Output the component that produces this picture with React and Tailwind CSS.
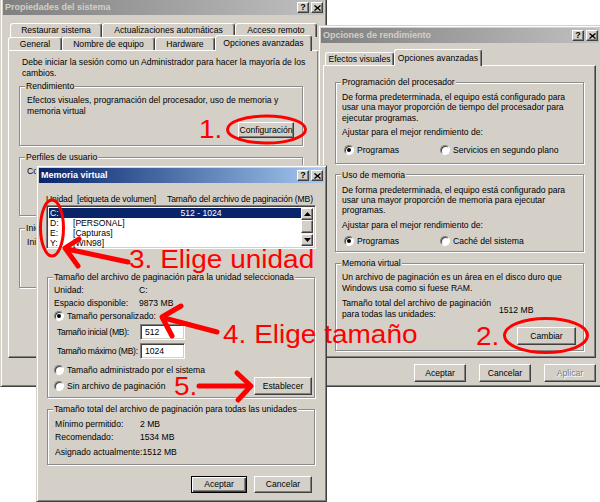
import React from "react";

const raisedCls =
  "bg-[#d4d0c8] border border-t-white border-l-white border-r-[#404040] border-b-[#404040] shadow-[inset_-1px_-1px_0_#808080]";
const sunkenCls =
  "bg-white border border-t-[#808080] border-l-[#808080] border-r-white border-b-white shadow-[inset_1px_1px_0_#404040,inset_-1px_-1px_0_#d4d0c8]";

function XGlyph() {
  return (
    <svg width="7" height="6" viewBox="0 0 7 6">
      <path d="M0.5 0.5 L6.5 5.5 M6.5 0.5 L0.5 5.5" stroke="#000" strokeWidth="1.4" fill="none" />
    </svg>
  );
}

function CapBtn({ children }) {
  return (
    <div className={"w-[12px] h-[11px] flex items-center justify-center text-black font-bold text-[9px] leading-none " + raisedCls}>
      {children}
    </div>
  );
}

function TitleBar({ title, active }) {
  return (
    <div
      className={
        "h-[15px] shrink-0 flex items-center pl-[2px] pr-[1px] " +
        (active
          ? "bg-linear-to-r from-[#0a246a] to-[#a6caf0] text-white"
          : "bg-linear-to-r from-[#808080] to-[#c0c0c0] text-[#d4d0c8]")
      }
    >
      <span className="flex-1 font-bold text-[9px] leading-none whitespace-nowrap">{title}</span>
      <div className="flex gap-[2px]">
        <CapBtn>?</CapBtn>
        <CapBtn>
          <XGlyph />
        </CapBtn>
      </div>
    </div>
  );
}

function Win({ className, children }) {
  return (
    <div
      className={
        "absolute bg-[#d4d0c8] border border-t-[#d4d0c8] border-l-[#d4d0c8] border-r-[#404040] border-b-[#404040] shadow-[inset_1px_1px_0_#fff,inset_-1px_-1px_0_#808080] p-[2px] flex flex-col " +
        className
      }
    >
      {children}
    </div>
  );
}

function Tab({ children, className, selected }) {
  return (
    <div
      className={
        "flex items-center justify-center bg-[#d4d0c8] border-t border-l border-r border-t-white border-l-white border-r-[#404040] rounded-t-[3px] shadow-[inset_-1px_0_0_#808080] whitespace-nowrap leading-none " +
        (selected ? "relative z-10 -mb-px " : "") +
        className
      }
    >
      {children}
    </div>
  );
}

function Panel({ className, children }) {
  return (
    <div
      className={
        "flex flex-col bg-[#d4d0c8] border border-t-white border-l-white border-r-[#404040] border-b-[#404040] shadow-[inset_-1px_-1px_0_#808080] " +
        className
      }
    >
      {children}
    </div>
  );
}

function Group({ title, className, bodyClass, children }) {
  return (
    <fieldset
      className={
        "min-w-0 border border-[#8c8c8c] shadow-[1px_1px_0_#fff,inset_1px_1px_0_#fff] " + className
      }
    >
      <legend className="ml-[5px] px-[1px] leading-[10px] bg-[#d4d0c8] whitespace-nowrap">{title}</legend>
      <div className={bodyClass}>{children}</div>
    </fieldset>
  );
}

function Btn({ children, className, def, disabled }) {
  return (
    <div
      className={
        "flex items-center justify-center bg-[#d4d0c8] whitespace-nowrap leading-none " +
        (def
          ? "border border-black shadow-[inset_1px_1px_0_#fff,inset_-1px_-1px_0_#404040,inset_-2px_-2px_0_#808080] "
          : "border border-t-white border-l-white border-r-[#404040] border-b-[#404040] shadow-[inset_-1px_-1px_0_#808080] ") +
        (disabled ? "text-[#808080] [text-shadow:1px_1px_0_#fff] " : "text-black ") +
        className
      }
    >
      {children}
    </div>
  );
}

function Radio({ checked }) {
  return (
    <div className="w-[10px] h-[10px] shrink-0 rounded-full bg-white border border-t-[#808080] border-l-[#808080] border-r-white border-b-white shadow-[inset_1px_1px_0_#404040] flex items-center justify-center">
      {checked && <div className="w-[4px] h-[4px] rounded-full bg-black" />}
    </div>
  );
}

function RadioLabel({ checked, children, className }) {
  return (
    <div className={"flex items-center gap-[3px] whitespace-nowrap " + (className || "")}>
      <Radio checked={checked} />
      <span>{children}</span>
    </div>
  );
}

function Arrow({ up }) {
  return (
    <svg width="7" height="4" viewBox="0 0 7 4">
      {up ? <path d="M3.5 0 L7 4 L0 4 Z" fill="#000" /> : <path d="M0 0 L7 0 L3.5 4 Z" fill="#000" />}
    </svg>
  );
}

export default function App() {
  const red =
    "absolute text-[25px] leading-[25px] text-[#ff0000] font-['Liberation_Sans',Arial,sans-serif] whitespace-nowrap origin-left scale-x-[1.12]";
  return (
    <div className="relative w-[600px] h-[502px] overflow-hidden bg-white font-['Liberation_Sans',Arial,sans-serif] text-[8.6px] leading-[10px] text-black">
      {/* Window 1: Propiedades del sistema */}
      <Win className="left-0 top-[-3px] w-[327px] h-[390px]">
        <TitleBar title="Propiedades del sistema" />
        <div className="mt-[8px] mx-[5px] flex flex-col">
          <div className="flex h-[14px] ml-[2px]">
            <Tab className="w-[92px] h-[14px]">Restaurar sistema</Tab>
            <Tab className="w-[133px] h-[14px]">Actualizaciones automáticas</Tab>
            <Tab className="w-[82px] h-[14px]">Acceso remoto</Tab>
          </div>
          <div className="flex items-end h-[13px]">
            <Tab className="w-[54px] h-[13px]">General</Tab>
            <Tab className="w-[93px] h-[13px]">Nombre de equipo</Tab>
            <Tab className="w-[60px] h-[13px]">Hardware</Tab>
            <Tab selected className="w-[97px] h-[16px]">Opciones avanzadas</Tab>
          </div>
          <Panel className="h-[308px] pt-[6px]">
            <p className="mx-[13px] leading-[11px] whitespace-nowrap">
              Debe iniciar la sesión como un Administrador para hacer la mayoría de los
              <br />
              cambios.
            </p>
            <Group title="Rendimiento" className="mt-[2px] ml-[10px] mr-[15px]" bodyClass="px-[7px] pt-[4px] pb-[7px] flex flex-col">
              <p className="leading-[11px] whitespace-nowrap">
                Efectos visuales, programación del procesador, uso de memoria y
                <br />
                memoria virtual
              </p>
              <div className="flex justify-end mt-[5px] pr-[1px]">
                <Btn className="w-[56px] h-[16px]">Configuración</Btn>
              </div>
            </Group>
            <Group title="Perfiles de usuario" className="mt-[6px] ml-[10px] mr-[15px]" bodyClass="px-[7px] pt-[4px] h-[53px] flex flex-col">
              <p className="leading-[11px] whitespace-nowrap">Configuración del escritorio relativa a su inicio de sesión</p>
              <div className="flex justify-end mt-[5px] pr-[1px]">
                <Btn className="w-[56px] h-[16px]">Configuración</Btn>
              </div>
            </Group>
            <Group title="Inicio y recuperación" className="mt-[7px] ml-[10px] mr-[15px]" bodyClass="px-[7px] pt-[4px] h-[54px] flex flex-col">
              <p className="leading-[11px] whitespace-nowrap">Inicio del sistema, error del sistema e información de depuración</p>
              <div className="flex justify-end mt-[5px] pr-[1px]">
                <Btn className="w-[56px] h-[16px]">Configuración</Btn>
              </div>
            </Group>
            <div className="flex justify-end gap-[8px] mt-[10px] mr-[15px]">
              <Btn className="w-[80px] h-[16px]">Variables de entorno</Btn>
              <Btn className="w-[80px] h-[16px]">Informe de errores</Btn>
            </div>
          </Panel>
        </div>
        <div className="flex justify-end gap-[13px] mt-[6px] mr-[4px]">
          <Btn className="w-[52px] h-[17px]">Aceptar</Btn>
          <Btn className="w-[52px] h-[17px]">Cancelar</Btn>
          <Btn className="w-[52px] h-[17px]" disabled>Aplicar</Btn>
        </div>
      </Win>

      {/* Window 2: Opciones de rendimiento */}
      <Win className="left-[318px] top-[25px] w-[284px] h-[362px]">
        <TitleBar title="Opciones de rendimiento" />
        <div className="mt-[6px] ml-[2px] mr-[3px] flex flex-col">
          <div className="flex items-end h-[16px] pl-[2px]">
            <Tab className="w-[69px] h-[13px]">Efectos visuales</Tab>
            <Tab selected className="w-[88px] h-[17px]">Opciones avanzadas</Tab>
          </div>
          <Panel className="h-[293px] pt-[11px]">
            <Group title="Programación del procesador" className="mx-[11px]" bodyClass="px-[6px] pt-[5px] pb-[7px] flex flex-col">
              <p className="leading-[10.4px] whitespace-nowrap">
                De forma predeterminada, el equipo está configurado para
                <br />
                usar una mayor proporción de tiempo del procesador para
                <br />
                ejecutar programas.
              </p>
              <p className="mt-[4px] leading-[10.4px]">Ajustar para el mejor rendimiento de:</p>
              <div className="flex items-center h-[12px] mt-[6px] pl-[2px]">
                <RadioLabel checked className="w-[96px]">Programas</RadioLabel>
                <RadioLabel>Servicios en segundo plano</RadioLabel>
              </div>
            </Group>
            <Group title="Uso de memoria" className="mt-[6px] mx-[11px]" bodyClass="px-[6px] pt-[5px] pb-[4px] flex flex-col">
              <p className="leading-[10.4px] whitespace-nowrap">
                De forma predeterminada, el equipo está configurado para
                <br />
                usar una mayor proporción de memoria para ejecutar
                <br />
                programas.
              </p>
              <p className="mt-[4px] leading-[10.4px]">Ajustar para el mejor rendimiento de:</p>
              <div className="flex items-center h-[12px] mt-[5px] pl-[2px]">
                <RadioLabel checked className="w-[96px]">Programas</RadioLabel>
                <RadioLabel>Caché del sistema</RadioLabel>
              </div>
            </Group>
            <Group title="Memoria virtual" className="mt-[6px] mx-[11px]" bodyClass="px-[6px] pt-[4px] pb-[5px] flex flex-col">
              <p className="leading-[10.5px] whitespace-nowrap">
                Un archivo de paginación es un área en el disco duro que
                <br />
                Windows usa como si fuese RAM.
              </p>
              <div className="flex items-center mt-[5px]">
                <p className="w-[157px] leading-[10.5px] whitespace-nowrap">
                  Tamaño total del archivo de paginación
                  <br />
                  para todas las unidades:
                </p>
                <span className="mt-[3px]">1512 MB</span>
              </div>
              <div className="flex justify-end mt-[8px] pr-[1px]">
                <Btn className="w-[59px] h-[18px]">Cambiar</Btn>
              </div>
            </Group>
          </Panel>
        </div>
        <div className="flex justify-end gap-[13px] mt-[6px] mr-[3px]">
          <Btn className="w-[52px] h-[18px]">Aceptar</Btn>
          <Btn className="w-[52px] h-[18px]">Cancelar</Btn>
          <Btn className="w-[52px] h-[18px]" disabled>Aplicar</Btn>
        </div>
      </Win>

      {/* Window 3: Memoria virtual */}
      <Win className="left-[36px] top-[165px] w-[291px] h-[337px]">
        <TitleBar title="Memoria virtual" active />
        <div className="flex mt-[11px] ml-[7px] leading-[10px] whitespace-nowrap tracking-[-0.15px]">
          <span className="w-[31px] shrink-0">Unidad</span>
          <span className="w-[90px] shrink-0">[etiqueta de volumen]</span>
          <span>Tamaño del archivo de paginación (MB)</span>
        </div>
        <div className={"flex mt-[1px] ml-[7px] mr-[8px] h-[44px] p-[2px] " + sunkenCls}>
          <div className="flex-1 flex flex-col">
            <div className="flex h-[10px] items-center bg-[#0a246a] text-white">
              <span className="w-[24px] pl-[1px]">C:</span>
              <span className="w-[98px]"></span>
              <span className="w-[60px] text-center">512 - 1024</span>
            </div>
            <div className="flex h-[10px] items-center">
              <span className="w-[24px] pl-[1px]">D:</span>
              <span className="w-[98px]">[PERSONAL]</span>
            </div>
            <div className="flex h-[10px] items-center">
              <span className="w-[24px] pl-[1px]">E:</span>
              <span className="w-[98px]">[Capturas]</span>
            </div>
            <div className="flex h-[10px] items-center">
              <span className="w-[24px] pl-[1px]">Y:</span>
              <span className="w-[98px]">[WIN98]</span>
            </div>
          </div>
          <div className="w-[12px] flex flex-col bg-[#ecebe8]">
            <div className={"h-[12px] flex items-center justify-center " + raisedCls}>
              <Arrow up />
            </div>
            <div className={"h-[13px] " + raisedCls}></div>
            <div className="flex-1"></div>
            <div className={"h-[12px] flex items-center justify-center " + raisedCls}>
              <Arrow />
            </div>
          </div>
        </div>

        <Group
          title="Tamaño del archivo de paginación para la unidad seleccionada"
          className="mt-[23px] ml-[8px] mr-[9px]"
          bodyClass="pl-[6px] pr-[2px] pt-[1px] pb-[2px] flex flex-col"
        >
          <div className="flex items-center h-[13px]">
            <span className="w-[85px]">Unidad:</span>
            <span>C:</span>
          </div>
          <div className="flex items-center h-[13px]">
            <span className="w-[85px]">Espacio disponible:</span>
            <span>9873 MB</span>
          </div>
          <div className="flex items-center h-[14px]">
            <RadioLabel checked>Tamaño personalizado:</RadioLabel>
          </div>
          <div className="flex items-center h-[16px] mt-[1px] pl-[3px]">
            <span className="w-[83px] shrink-0 whitespace-nowrap tracking-[-0.3px]">Tamaño inicial (MB):</span>
            <div className={"w-[45px] h-[16px] flex items-center pl-[4px] " + sunkenCls}>512</div>
          </div>
          <div className="flex items-center h-[16px] mt-[3px] pl-[3px]">
            <span className="w-[83px] shrink-0 whitespace-nowrap tracking-[-0.3px]">Tamaño máximo (MB):</span>
            <div className={"w-[45px] h-[16px] flex items-center pl-[4px] " + sunkenCls}>1024</div>
          </div>
          <div className="flex items-center h-[12px] mt-[5px]">
            <RadioLabel>Tamaño administrado por el sistema</RadioLabel>
          </div>
          <div className="flex items-center justify-between h-[18px] mt-[1px]">
            <RadioLabel>Sin archivo de paginación</RadioLabel>
            <Btn className="w-[58px] h-[18px]">Establecer</Btn>
          </div>
        </Group>

        <Group
          title="Tamaño total del archivo de paginación para todas las unidades"
          className="mt-[6px] ml-[8px] mr-[9px]"
          bodyClass="pl-[7px] pt-[3px] pb-[6px] flex flex-col"
        >
          <div className="flex items-center h-[13px]">
            <span className="w-[85px]">Mínimo permitido:</span>
            <span>2 MB</span>
          </div>
          <div className="flex items-center h-[13px]">
            <span className="w-[85px]">Recomendado:</span>
            <span>1534 MB</span>
          </div>
          <div className="flex items-center h-[13px] mt-[2px] whitespace-nowrap">
            <span>Asignado actualmente:1512 MB</span>
          </div>
        </Group>

        <div className="flex justify-end gap-[7px] mt-[11px] mr-[12px]">
          <Btn def className="w-[56px] h-[17px]">Aceptar</Btn>
          <Btn className="w-[58px] h-[17px]">Cancelar</Btn>
        </div>
      </Win>

      {/* Annotations */}
      <svg className="absolute inset-0 pointer-events-none" width="600" height="502" viewBox="0 0 600 502">
        <g fill="none" stroke="#ff0000" strokeWidth="3">
          <ellipse cx="266.5" cy="129.5" rx="39" ry="13.5" />
          <ellipse cx="546" cy="335.5" rx="41.5" ry="17" />
          <ellipse cx="52" cy="228" rx="11.5" ry="28" />
        </g>
        <g fill="none" stroke="#ff0000" strokeWidth="5" strokeLinecap="round" strokeLinejoin="round">
          <path d="M128 262 L67 249" />
          <path d="M79 239 L65 248 L78 266" />
          <path d="M217 332 L164 318" />
          <path d="M181 306 L162 317 L172 336" />
          <path d="M199 386 L249 386" />
          <path d="M237 373 L251 386 L238 400" />
        </g>
      </svg>
      <div className={red + " left-[199px] top-[117px]"}>1.</div>
      <div className={red + " left-[476px] top-[324px]"}>2.</div>
      <div className={red + " left-[129px] top-[247px]"}>3. Elige unidad</div>
      <div className={red + " left-[223px] top-[322px]"}>4. Elige tamaño</div>
      <div className={red + " left-[174px] top-[374px]"}>5.</div>
    </div>
  );
}
